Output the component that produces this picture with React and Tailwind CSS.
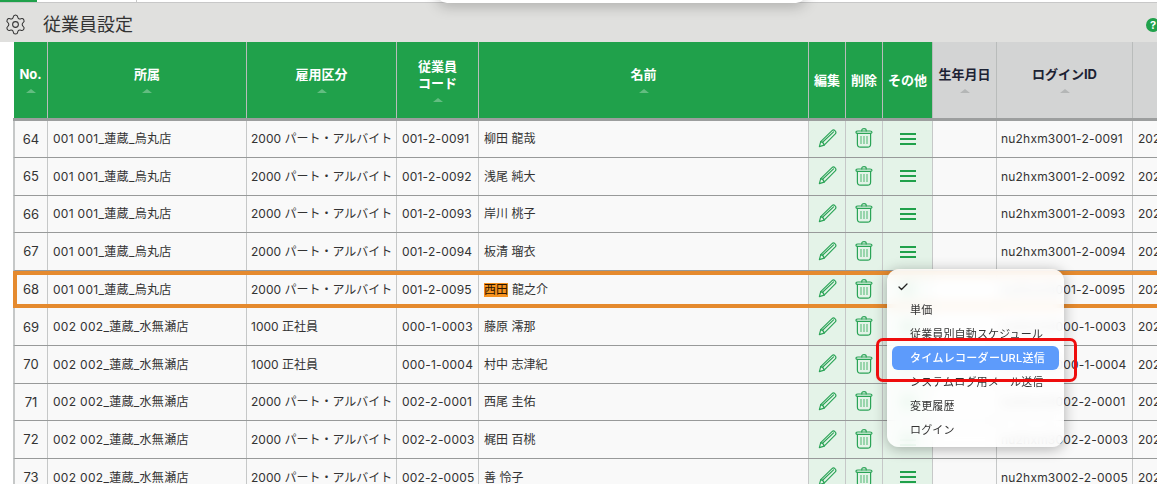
import { Check, Settings } from 'lucide-react';

const rows = [
  { no: 64, dept: '001 001_蓮蔵_烏丸店', type: '2000 パート・アルバイト', code: '001-2-0091', name: '柳田 龍哉', login: 'nu2hxm3001-2-0091' },
  { no: 65, dept: '001 001_蓮蔵_烏丸店', type: '2000 パート・アルバイト', code: '001-2-0092', name: '浅尾 純大', login: 'nu2hxm3001-2-0092' },
  { no: 66, dept: '001 001_蓮蔵_烏丸店', type: '2000 パート・アルバイト', code: '001-2-0093', name: '岸川 桃子', login: 'nu2hxm3001-2-0093' },
  { no: 67, dept: '001 001_蓮蔵_烏丸店', type: '2000 パート・アルバイト', code: '001-2-0094', name: '板清 瑠衣', login: 'nu2hxm3001-2-0094' },
  { no: 68, dept: '001 001_蓮蔵_烏丸店', type: '2000 パート・アルバイト', code: '001-2-0095', name: '龍之介', mark: '西田', login: 'nu2hxm3001-2-0095', active: true },
  { no: 69, dept: '002 002_蓮蔵_水無瀬店', type: '1000 正社員', code: '000-1-0003', name: '藤原 澪那', login: 'nu2hxm3000-1-0003' },
  { no: 70, dept: '002 002_蓮蔵_水無瀬店', type: '1000 正社員', code: '000-1-0004', name: '村中 志津紀', login: 'nu2hxm3000-1-0004' },
  { no: 71, dept: '002 002_蓮蔵_水無瀬店', type: '2000 パート・アルバイト', code: '002-2-0001', name: '西尾 圭佑', login: 'nu2hxm3002-2-0001' },
  { no: 72, dept: '002 002_蓮蔵_水無瀬店', type: '2000 パート・アルバイト', code: '002-2-0003', name: '梶田 百桃', login: 'nu2hxm3002-2-0003' },
  { no: 73, dept: '002 002_蓮蔵_水無瀬店', type: '2000 パート・アルバイト', code: '002-2-0005', name: '善 怜子', login: 'nu2hxm3002-2-0005' },
];

const menuItems = ['単価', '従業員別自動スケジュール', 'タイムレコーダーURL送信', 'システムログ用メール送信', '変更履歴', 'ログイン'];

function SortMark({ gray }) {
  return (
    <span
      className={`mt-[6px] block h-0 w-0 border-x-[5px] border-b-[4px] border-x-transparent ${gray ? 'border-b-[#b4b6b6]' : 'border-b-[#63bd81]'}`}
    />
  );
}

function HeadCell({ width, gray, noSort, children }) {
  return (
    <div
      className={`flex h-full shrink-0 flex-col items-center justify-center border-r border-[#b9bcbb] text-[13px] leading-[17px] font-bold tracking-normal ${noSort ? 'pt-[1px]' : 'pb-[1px]'} ${width} ${gray ? 'bg-[#d3d4d4] text-[#1c2233]' : 'bg-[#20a14b] text-white'}`}
    >
      <div className="text-center">{children}</div>
      {!noSort && <SortMark gray={gray} />}
    </div>
  );
}

function Cell({ width, className = '', children }) {
  return (
    <div className={`flex h-full shrink-0 items-center overflow-hidden border-r border-[#c6c8c8] whitespace-nowrap ${width} ${className}`}>
      {children}
    </div>
  );
}

function PencilIcon() {
  return (
    <svg width="19" height="19" viewBox="0 0 21 21" fill="none" stroke="#2ba457" strokeWidth="1.3" strokeLinejoin="round" strokeLinecap="round">
      <path d="M1.5 19.5 L3 14 L15.5 1.8 C16.5 0.9 17.8 0.9 18.9 2 C20 3.1 20 4.4 19.1 5.4 L6.8 17.8 Z" />
      <path d="M3 14 C4.6 14.2 6.4 15.9 6.8 17.8" />
      <path d="M5 14.6 L17.2 3.2" />
    </svg>
  );
}

function TrashIcon() {
  return (
    <svg width="18" height="20" viewBox="0 0 18 20" fill="none" stroke="#2ba457" strokeWidth="1.2" strokeLinecap="round" strokeLinejoin="round">
      <path d="M1 4.2 C1 3.2 2 3 3 3 H15 C16 3 17 3.2 17 4.2 C17 5.2 16 5.4 15 5.4 H3 C2 5.4 1 5.2 1 4.2 Z" />
      <path d="M6.8 3 V2.2 C6.8 1.2 7.8 0.7 9 0.7 C10.2 0.7 11.2 1.2 11.2 2.2 V3" />
      <path d="M2.4 5.4 V16 C2.4 18 3.6 19.2 5.4 19.2 H12.6 C14.4 19.2 15.6 18 15.6 16 V5.4" />
      <path d="M6 8 V16 M9 8 V16 M12 8 V16" strokeWidth="1.7" strokeLinecap="butt" stroke="#8ccfa2" />
    </svg>
  );
}

function Row({ row }) {
  return (
    <div
      className={`relative flex h-[37.6px] border-b border-l-2 border-b-[#989a9a] border-l-[#c6c8c8] bg-[#f9f9f9] ${row.active ? 'z-10 outline-4 -outline-offset-4 outline-[#e58a2e]' : ''}`}
    >
      <Cell width="w-[33px]" className="justify-center pt-[1px] text-[13px]">{row.no}</Cell>
      <Cell width="w-[199px]" className="pt-[1px] pl-[5px] tracking-[0.3px]">{row.dept}</Cell>
      <Cell width="w-[150px]" className="pt-[1px] pl-[4px]">{row.type}</Cell>
      <Cell width="w-[82px]" className="pt-[1px] pl-[5px] tracking-[0.2px]">{row.code}</Cell>
      <Cell width="w-[330px]" className="pt-[1px] pl-[5px]">
        {row.mark && <span className="mr-[4px] bg-[#f6921e] leading-[14px] text-[#2a1500]">{row.mark}</span>}
        {row.name}
      </Cell>
      <Cell width="w-[37px]" className="justify-center bg-[#e4f3e8] pb-[1px]"><PencilIcon /></Cell>
      <Cell width="w-[37px]" className="justify-center bg-[#e4f3e8] pb-[1px]"><TrashIcon /></Cell>
      <Cell width="w-[50px]" className="flex-col justify-center gap-[3px] bg-[#e4f3e8]">
        <span className="h-[2px] w-[16px] bg-[#20a14b]" />
        <span className="h-[2px] w-[16px] bg-[#20a14b]" />
        <span className="h-[2px] w-[16px] bg-[#20a14b]" />
      </Cell>
      <Cell width="w-[64px]" />
      <Cell width="w-[136px]" className="pt-[1px] pl-[4px] tracking-[0.2px]">{row.login}</Cell>
      <Cell width="w-[80px]" className="border-r-0 pt-[1px] pl-[5px]">202</Cell>
    </div>
  );
}

export default function App() {
  return (
    <div className="relative h-[484px] w-[1157px] overflow-hidden bg-white font-['Inter','Noto_Sans_CJK_JP',sans-serif] text-[12px] text-[#333]">
      {/* top strip */}
      <div className="flex h-[3px] border-b border-[#c8c8c8]">
        <div className="w-[37px] bg-[#20a14b]" />
        <div className="w-[100px] border-r border-[#c8c8c8]" />
      </div>

      {/* title bar */}
      <div className="flex h-[39px] items-center bg-[#e0e0de] pt-[4px]">
        <Settings size={23} strokeWidth={1.1} color="#333" className="ml-[4px]" />
        <span className="ml-[16px] text-[18px] text-[#333]">従業員設定</span>
        <span className="mt-[1px] mr-[-3px] ml-auto flex h-[14px] w-[14px] items-center justify-center rounded-full bg-[#20a14b] text-[11px] font-bold text-white">?</span>
      </div>

      {/* table */}
      <div className="ml-[13px] w-[1190px]">
        <div className="ml-[1px] flex h-[76px]">
          <HeadCell width="w-[34px]">No.</HeadCell>
          <HeadCell width="w-[199px]">所属</HeadCell>
          <HeadCell width="w-[150px]">雇用区分</HeadCell>
          <HeadCell width="w-[82px]">従業員<br />コード</HeadCell>
          <HeadCell width="w-[330px]">名前</HeadCell>
          <HeadCell width="w-[37px]" noSort>編集</HeadCell>
          <HeadCell width="w-[37px]" noSort>削除</HeadCell>
          <HeadCell width="w-[50px]" noSort>その他</HeadCell>
          <HeadCell width="w-[64px]" gray>生年月日</HeadCell>
          <HeadCell width="w-[136px]" gray>ログインID</HeadCell>
          <HeadCell width="w-[80px]" gray />
        </div>
        <div className="h-[2.5px] bg-[#9c9e9e]" />
        {rows.map((row) => (
          <Row key={row.no} row={row} />
        ))}
      </div>

      {/* popover from the page above */}
      <div className="absolute top-[-10px] left-[437px] h-[13px] w-[369px] rounded-b-[10px] bg-white shadow-[0_3px_14px_rgba(0,0,0,0.25)]" />

      {/* row menu */}
      <div className="absolute top-[269px] left-[887px] z-20 flex h-[178px] w-[177px] flex-col rounded-[12px] bg-white/85 px-[5px] pt-[5px] text-[11px] tracking-[0.15px] text-[#333] shadow-[0_2px_14px_rgba(0,0,0,0.3)] backdrop-blur-[6px]">
        <div className="flex h-[24px] items-center pt-[1px] pl-[5px]">
          <Check size={12} strokeWidth={2.5} color="#222" />
        </div>
        {menuItems.map((item) => (
          <div
            key={item}
            className={`flex h-[24px] shrink-0 items-center rounded-[6px] pl-[18px] whitespace-nowrap ${item.includes('URL') ? 'bg-[#5d9bfb] font-medium tracking-[0.3px] text-white' : ''}`}
          >
            {item}
          </div>
        ))}
      </div>

      {/* red annotation */}
      <div className="absolute top-[338px] left-[876px] z-30 h-[44px] w-[201px] rounded-[7px] border-[3px] border-[#ee0d0d]" />
    </div>
  );
}
